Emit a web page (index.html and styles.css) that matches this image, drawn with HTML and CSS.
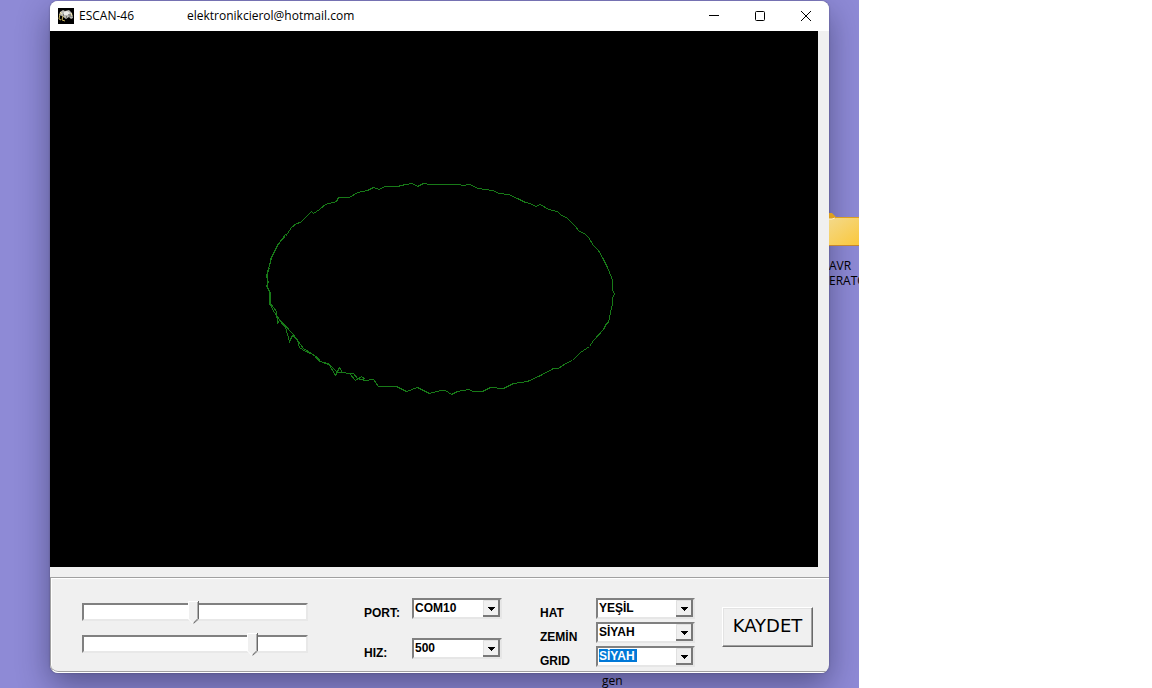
FILE: index.html
```html
<!DOCTYPE html>
<html lang="tr">
<head>
<meta charset="utf-8">
<title>ESCAN-46</title>
<link rel="stylesheet" href="styles.css">
</head>
<body>
<div class="desktop">
  <div class="shortcut">
    <svg class="folder" viewBox="0 0 40 34" aria-hidden="true">
      <defs>
        <linearGradient id="folderFill" x1="0" y1="0" x2="1" y2="1">
          <stop offset="0" stop-color="#f3d98a"/>
          <stop offset="1" stop-color="#fcc52f"/>
        </linearGradient>
      </defs>
      <path d="M0 0H3L7 4H40V10H0Z" fill="#dda01f"/>
      <path d="M0 6H4L7 5H40V33H0Z" fill="url(#folderFill)"/>
      <path d="M0 6H3L6 5" fill="none" stroke="#fff3cf"/>
      <path d="M0 32.5H40" stroke="#c5862f"/>
    </svg>
    <span>AVR</span>
    <span>ERATO</span>
  </div>
  <span class="desktop-label">gen</span>

  <main class="window">
    <header class="titlebar">
      <svg class="app-icon" viewBox="0 0 16 16" aria-hidden="true">
        <rect width="16" height="16" fill="#000"/>
        <path d="M2 4L5 2L7 3L11 2L14 5L15 10L13 11L11 9L8 11L4 8L1 7Z" fill="#b9b9b4"/>
        <path d="M6 4L9 3L12 5L10 7L6 7Z" fill="#ececea"/>
        <path d="M10 6L13 6L14 9L11 9Z" fill="#8b8b88"/>
        <path d="M2 6L1 11L3 12M5 8L4 12L7 13" fill="none" stroke="#c9b45c"/>
        <path d="M2 4L4 6M13 5L14 8" fill="none" stroke="#eee3a8"/>
        <path d="M5 7H6M8 9H9" stroke="#333"/>
      </svg>
      <h1 class="title">ESCAN-46</h1>
      <span class="contact">elektronikcierol@hotmail.com</span>
      <div class="window-buttons">
        <button type="button" class="window-button" aria-label="Minimize">
          <svg viewBox="0 0 12 12" aria-hidden="true"><path d="M1 5.5H11"/></svg>
        </button>
        <button type="button" class="window-button" aria-label="Maximize">
          <svg viewBox="0 0 12 12" aria-hidden="true"><rect x="1.5" y="1.5" width="9" height="9" rx="1"/></svg>
        </button>
        <button type="button" class="window-button" aria-label="Close">
          <svg viewBox="0 0 12 12" aria-hidden="true"><path d="M1 1L11 11M11 1L1 11"/></svg>
        </button>
      </div>
    </header>

    <div class="scope">
      <svg class="trace" viewBox="49.5 30.5 768 536" role="img" aria-label="ESCAN-46">
        <polyline points="440,184 430,184 423,183 417,186 412,183 405,184 397,186 384,186 379,189 373,187 367,190 357,192 349,197 338,197 336,201 325,204 319,209 313,213 311,211 300,222 296,223 291,227 285,236 281,239 275,249 270,259 269,267 267,273 267,287 270,292 270,303 276,311 277,323 279,320 285,327 289,341 292,335 297,340 299,347 305,351 313,354 319,361 328,363 335,375 339,367 342,372 349,373 355,380 361,376 365,379"/>
        <polyline points="285,234 280,241 276,246 271,258 268,268 266,276 268,282 266,285 269,291 269,303 274,312 279,319 292,333 303,348 317,357 320,361 330,365 337,372 353,373 357,378 365,380 373,379 378,386 396,386 406,391 417,387 429,393 440,390 445,390 451,394 457,391 468,389 473,391 482,391 490,387 503,388 513,383 527,381 540,375 553,368 558,368 565,363 572,360 580,352 589,346 593,340 603,329 606,323 608,322 610,312 612,303 612,298 614,293 612,290 612,280 611,277 607,267 603,259 598,250 593,245 588,237 584,233 579,231 574,225 566,217 561,215 557,211 548,209 540,204 535,206 530,203 525,202 517,198 508,194 499,193 492,190 478,188 469,184 463,185 458,184 440,184"/>
      </svg>
    </div>

    <form class="controls">
      <div class="sliders">
        <input class="slider" type="range" min="0" max="211" value="104" aria-label="X">
        <input class="slider" type="range" min="0" max="211" value="163" aria-label="Y">
      </div>
      <div class="fields connection">
        <label for="port">PORT:</label>
        <select id="port" class="combo"><option>COM10</option></select>
        <label for="speed">HIZ:</label>
        <select id="speed" class="combo"><option>500</option></select>
      </div>
      <div class="fields colors">
        <label for="line">HAT</label>
        <select id="line" class="combo"><option>YEŞİL</option><option>SİYAH</option></select>
        <label for="ground">ZEMİN</label>
        <select id="ground" class="combo"><option>SİYAH</option><option>YEŞİL</option></select>
        <label for="grid">GRID</label>
        <select id="grid" class="combo combo-selected"><option>SİYAH</option><option>YEŞİL</option></select>
      </div>
      <button type="button" class="save">KAYDET</button>
    </form>
  </main>
</div>
</body>
</html>
```
FILE: styles.css
```css
* {
  box-sizing: border-box;
}

body {
  margin: 0;
  padding-right: 293px;
  background: #fff;
  color: #000;
  font: 12px/16px "Open Sans", "Noto Sans", sans-serif;
}

.desktop {
  position: relative;
  display: flex;
  flex-direction: column;
  min-height: 100vh;
  padding: 1px 30px 15px 50px;
  overflow: hidden;
  background: #8e8ad6;
}

.shortcut {
  position: absolute;
  top: 213px;
  right: 0;
  display: flex;
  flex-direction: column;
  width: 30px;
  overflow: hidden;
  line-height: 15px;
}

.folder {
  flex: none;
  width: 40px;
  height: 34px;
  margin-bottom: 11px;
}

.desktop-label {
  position: absolute;
  bottom: -1px;
  left: 602px;
  z-index: 1;
}

.window {
  display: flex;
  flex: 1;
  flex-direction: column;
  border-radius: 8px;
  overflow: hidden;
  background: #f0f0f0;
  box-shadow: 0 0 2px #55527a, 0 12px 32px rgba(20, 20, 50, 0.45);
}

.titlebar {
  display: flex;
  align-items: center;
  height: 30px;
  padding-left: 8px;
  background: #fff;
}

.app-icon {
  width: 16px;
  height: 16px;
  margin-right: 5px;
}

.title {
  margin: 0;
  font-size: 12px;
  font-weight: 400;
}

.contact {
  margin-left: 53px;
}

.window-buttons {
  display: flex;
  margin-left: auto;
}

.window-button {
  display: grid;
  place-items: center;
  width: 46px;
  height: 30px;
  padding: 0;
  border: 0;
  background: none;
}

.window-button svg {
  width: 12px;
  height: 12px;
  fill: none;
  stroke: #000;
}

.scope {
  display: flex;
  flex: 1;
  min-height: 0;
  margin: 0 11px 10px 0;
  background: #000;
}

.trace {
  width: 100%;
  height: 100%;
  fill: none;
  stroke: #187a18;
  shape-rendering: crispEdges;
}

.controls {
  display: flex;
  align-items: flex-start;
  height: 96px;
  padding: 20px 16px 0 31px;
  border: 1px solid #a0a0a0;
  border-right: 0;
  border-bottom-color: #fff;
  border-bottom-left-radius: 8px;
  box-shadow: inset 1px 1px #fff, inset 0 -1px #a0a0a0;
  font: bold 12px/16px "Liberation Sans", Arial, sans-serif;
}

.sliders {
  display: flex;
  flex-direction: column;
  gap: 9px;
  width: 226px;
  padding-top: 2px;
}

.slider {
  appearance: none;
  display: block;
  width: 100%;
  height: 23px;
  margin: 0;
  background: none;
}

.slider::-webkit-slider-runnable-track {
  height: 18px;
  border: 2px solid;
  border-color: #808080 #e8e8e8 #e8e8e8 #808080;
  background: #fff;
}

.slider::-webkit-slider-thumb {
  appearance: none;
  width: 11px;
  height: 23px;
  margin-top: -4px;
  background: url("data:image/svg+xml,%3Csvg xmlns='http://www.w3.org/2000/svg' viewBox='0 0 11 23'%3E%3Cpath d='M0 0H11V18L6 23H5L0 18Z' fill='%23f0f0f0'/%3E%3Cpath d='M10.5 0V18L5.5 22.5' fill='none' stroke='%23696969'/%3E%3Cpath d='M9.5 1V17.5L5.5 21.5' fill='none' stroke='%23b0b0b0'/%3E%3Cpath d='M10 .5H.5V18L5 22.5' fill='none' stroke='%23fff'/%3E%3C/svg%3E");
}

.fields {
  display: grid;
}

.fields label {
  padding-top: 7px;
}

.connection {
  grid-template-columns: 48px 90px;
  grid-auto-rows: 40px;
  margin-left: 56px;
}

.colors {
  grid-template-columns: 56px 99px;
  grid-auto-rows: 24px;
  margin-left: 38px;
}

.combo {
  --arrow: url("data:image/svg+xml,%3Csvg xmlns='http://www.w3.org/2000/svg' viewBox='0 0 17 17'%3E%3Cpath d='M0 0H17V17H0Z' fill='%23f0f0f0'/%3E%3Cpath d='M.5 17V.5H16' fill='none' stroke='%23e0e0e0'/%3E%3Cpath d='M16 0V16H0' fill='none' stroke='%23787878' stroke-width='2'/%3E%3Cpath d='M5 7H12V8H11V9H10V10H9V11H8V10H7V9H6V8H5Z'/%3E%3C/svg%3E");
  appearance: none;
  width: 100%;
  height: 21px;
  padding: 0 20px 2px 1px;
  border: 2px solid;
  border-color: #808080 #e6e6e6 #e6e6e6 #808080;
  border-radius: 0;
  color: #000;
  font: inherit;
  background: var(--arrow) right top / 17px 17px no-repeat #fff;
}

.combo-selected {
  color: #fff;
  background:
    var(--arrow) right top / 17px 17px no-repeat,
    linear-gradient(#0078d7, #0078d7) 1px 1px / 38px 13px no-repeat,
    #fff;
}

.save {
  width: 91px;
  height: 40px;
  margin: 9px 0 0 auto;
  padding: 0 0 2px;
  border: 1px solid;
  border-color: #fff #696969 #696969 #fff;
  background: #f0f0f0;
  box-shadow: inset -1px -1px #a0a0a0, inset 1px 1px #e3e3e3;
  color: #000;
  font: 18px/20px "DejaVu Sans", Verdana, sans-serif;
}
```
